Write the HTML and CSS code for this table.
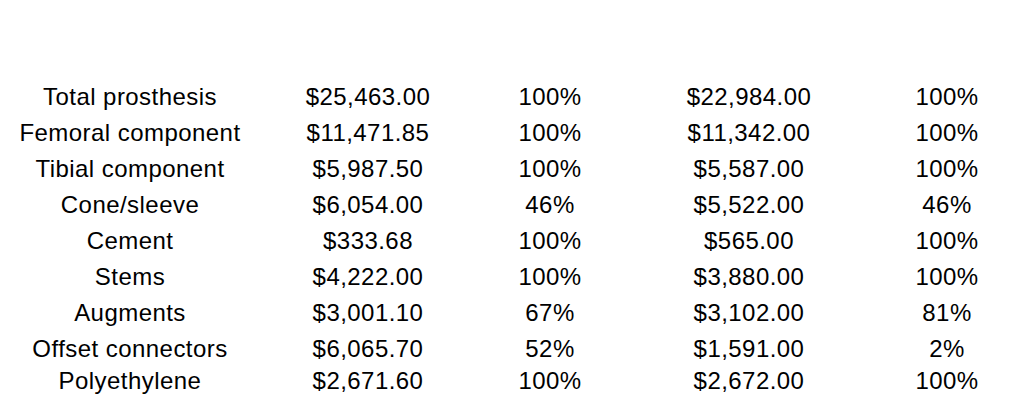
FILE: index.html
```html
<!DOCTYPE html>
<html>
<head>
<meta charset="utf-8">
<link rel="stylesheet" href="styles.css">
</head>
<body>
<div class="table">
  <div class="row"><div class="c1">Total prosthesis</div><div class="c2">$25,463.00</div><div class="c3">100%</div><div class="c4">$22,984.00</div><div class="c5">100%</div></div>
  <div class="row"><div class="c1">Femoral component</div><div class="c2">$11,471.85</div><div class="c3">100%</div><div class="c4">$11,342.00</div><div class="c5">100%</div></div>
  <div class="row"><div class="c1">Tibial component</div><div class="c2">$5,987.50</div><div class="c3">100%</div><div class="c4">$5,587.00</div><div class="c5">100%</div></div>
  <div class="row"><div class="c1">Cone/sleeve</div><div class="c2">$6,054.00</div><div class="c3">46%</div><div class="c4">$5,522.00</div><div class="c5">46%</div></div>
  <div class="row"><div class="c1">Cement</div><div class="c2">$333.68</div><div class="c3">100%</div><div class="c4">$565.00</div><div class="c5">100%</div></div>
  <div class="row"><div class="c1">Stems</div><div class="c2">$4,222.00</div><div class="c3">100%</div><div class="c4">$3,880.00</div><div class="c5">100%</div></div>
  <div class="row"><div class="c1">Augments</div><div class="c2">$3,001.10</div><div class="c3">67%</div><div class="c4">$3,102.00</div><div class="c5">81%</div></div>
  <div class="row"><div class="c1">Offset connectors</div><div class="c2">$6,065.70</div><div class="c3">52%</div><div class="c4">$1,591.00</div><div class="c5">2%</div></div>
  <div class="row last"><div class="c1">Polyethylene</div><div class="c2">$2,671.60</div><div class="c3">100%</div><div class="c4">$2,672.00</div><div class="c5">100%</div></div>
</div>
</body>
</html>
```

FILE: styles.css
```css
html, body {
  margin: 0;
  padding: 0;
  background: #ffffff;
}
body {
  width: 1020px;
  height: 406px;
  overflow: hidden;
  font-family: "Liberation Sans", Arial, sans-serif;
  color: #000000;
}
.table {
  padding-top: 79px;
  display: flex;
  flex-direction: column;
}
.row {
  display: grid;
  grid-template-columns: 260px 216px 148px 250px 146px;
  height: 36px;
  align-items: center;
  font-size: 24px;
  letter-spacing: 0.45px;
  line-height: 28px;
  text-align: center;
  white-space: nowrap;
}
.row.last {
  height: 28px;
}
```
